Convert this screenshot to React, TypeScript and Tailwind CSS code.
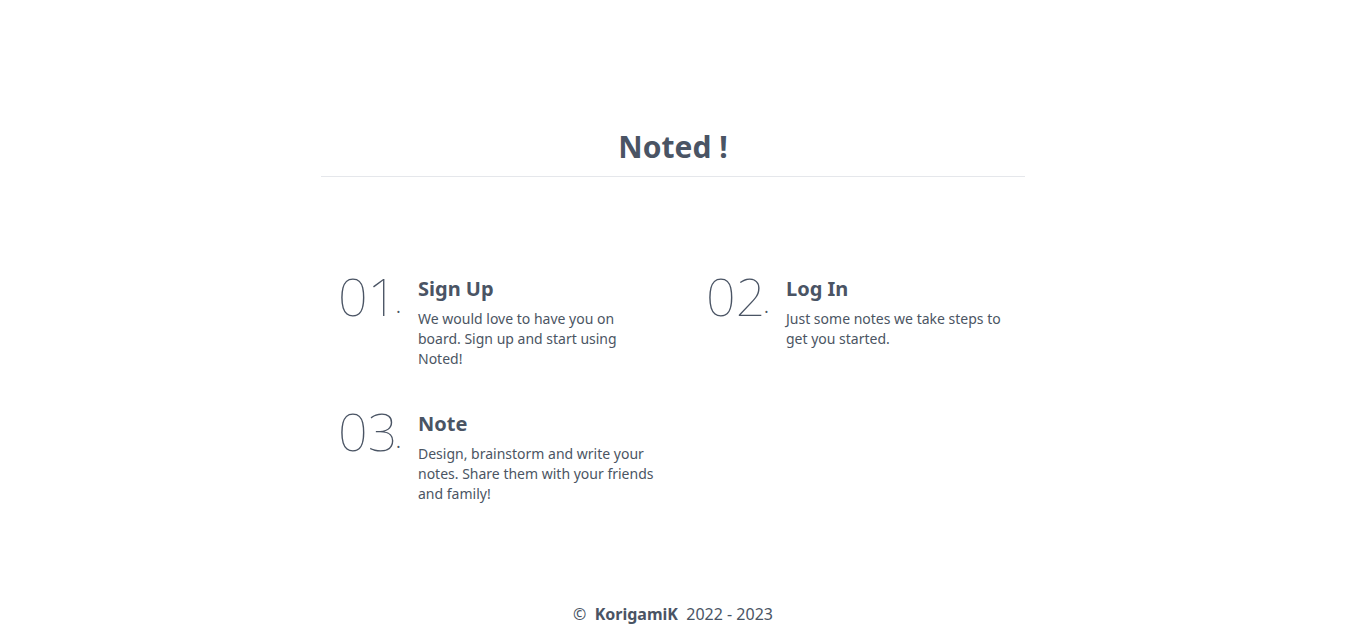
const STEPS = [
  { n: "01", title: "Sign Up", body: "We would love to have you on board. Sign up and start using Noted!" },
  { n: "02", title: "Log In", body: "Just some notes we take steps to get you started." },
  { n: "03", title: "Note", body: "Design, brainstorm and write your notes. Share them with your friends and family!" },
]

export default function App() {
  return (
    <div className="min-h-[641px] bg-white flex flex-col text-gray-600" style={{ fontFamily: '"Noto Sans", "Open Sans", sans-serif' }}>
      <div className="w-[704px] mx-auto pt-[129px]">
        <h1 className="text-[30px] leading-9 font-bold text-center text-[#4a5464] pb-[11px] border-b border-gray-200">Noted !</h1>

        <div className="grid grid-cols-[320px_320px] gap-x-12 gap-y-[37px] px-[17px] mt-[94px]">
          {STEPS.map(s => (
            <div key={s.n} className="flex">
              <div className="w-[80px] shrink-0 flex items-baseline text-[#4a5464] -mt-[4px]">
                <span className="text-[52px] leading-[58px] font-thin">{s.n}</span>
                <span className="text-base font-normal -ml-[1px] relative -top-[3px]">.</span>
              </div>
              <div className="w-[238px] pt-[4px]">
                <h3 className="text-xl font-bold text-[#4a5464] leading-7">{s.title}</h3>
                <p className="text-sm leading-5 mt-[6px] text-[#4b5563]">{s.body}</p>
              </div>
            </div>
          ))}
        </div>
      </div>

      <footer className="mt-auto pb-[15px] text-center text-base text-[#4a5464]">
        ©&nbsp;&nbsp;<span className="font-bold">KorigamiK</span>&nbsp;&nbsp;2022 - 2023
      </footer>
    </div>
  )
}
